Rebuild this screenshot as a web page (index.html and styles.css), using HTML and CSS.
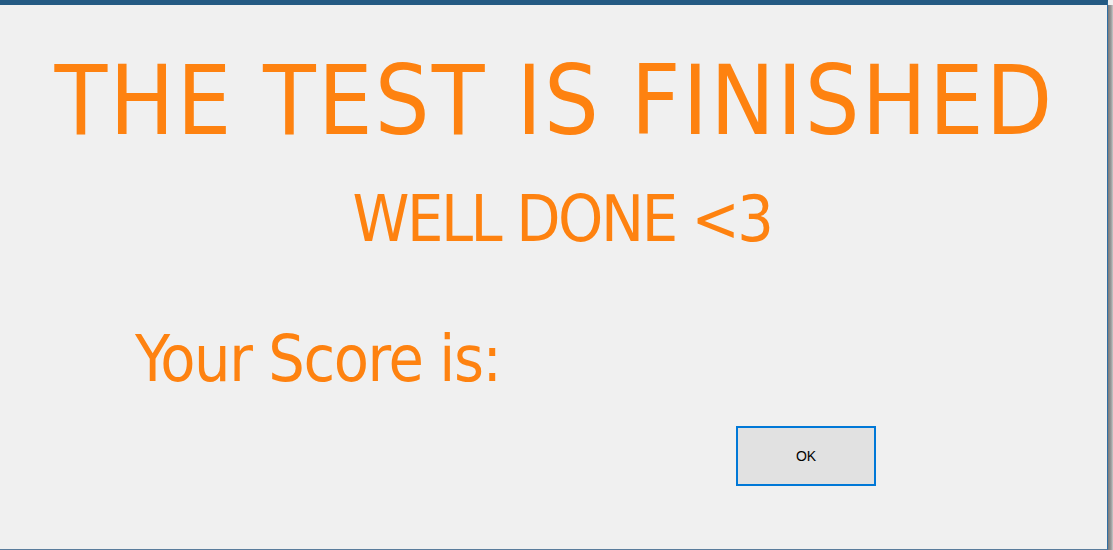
FILE: index.html
```html
<!DOCTYPE html>
<html lang="en">
<head>
<meta charset="utf-8">
<title>Test finished</title>
<link rel="stylesheet" href="styles.css">
</head>
<body>
<div class="screen">
  <div class="window">
    <h1 class="title">THE TEST IS FINISHED</h1>
    <p class="subtitle">WELL DONE &lt;3</p>
    <p class="score">Your Score is:</p>
    <div class="actions">
      <button class="ok-button" type="button">OK</button>
    </div>
  </div>
  <div class="edge-shadow"></div>
</div>
</body>
</html>
```

FILE: styles.css
```css
html, body {
  margin: 0;
  padding: 0;
  background: #f0f0f0;
}

.screen {
  display: flex;
  width: 1113px;
  height: 550px;
  overflow: hidden;
}

.window {
  box-sizing: border-box;
  width: 1108px;
  height: 550px;
  background: #f0f0f0;
  border-top: 5px solid #245a83;
  border-right: 1px solid #2f6ea3;
  border-bottom: 1px solid #5a7c9c;
  display: flex;
  flex-direction: column;
  color: #fe8210;
  font-family: "DejaVu Sans Condensed", "DejaVu Sans", sans-serif;
}

.edge-shadow {
  flex: 1;
  margin-top: 5px;
  background: linear-gradient(to right, #7a7a7a, #9a9a9a 60%, #c8c8c8);
}

.title {
  margin: 48px 0 0 0;
  font-size: 96px;
  font-weight: normal;
  line-height: 96px;
  text-align: center;
  letter-spacing: 2.2px;
  padding-left: 2px;
  white-space: nowrap;
}

.subtitle {
  margin: 38px 0 0 0;
  font-size: 64px;
  line-height: 64px;
  text-align: center;
  letter-spacing: -2.4px;
  padding-left: 17px;
  white-space: nowrap;
}

.score {
  margin: 76px 0 0 135px;
  font-size: 64px;
  line-height: 64px;
  letter-spacing: -1.4px;
  white-space: nowrap;
}

.actions {
  margin: 35px 0 0 736px;
  display: flex;
}

.ok-button {
  box-sizing: border-box;
  width: 140px;
  height: 60px;
  background: #e1e1e1;
  border: 2px solid #0078d7;
  border-radius: 0;
  padding: 0;
  color: #000;
  font-family: "Liberation Sans", Arial, sans-serif;
  font-size: 14px;
  line-height: 1;
}
```
